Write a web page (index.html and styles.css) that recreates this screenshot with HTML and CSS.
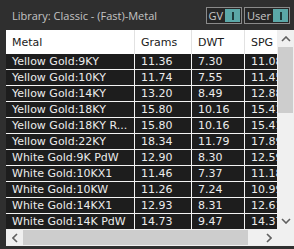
FILE: index.html
```html
<!DOCTYPE html>
<html>
<head>
    <title>Metal Library</title>
    <link rel="stylesheet" href="styles.css">
</head>
<body>
    <section class="panel">
        <div class="topbar">
            <span class="title">Library: Classic - (Fast)-Metal</span>
            <div class="toggles">
                <div class="toggle"><span class="label">GV</span><span class="knob"></span></div>
                <div class="toggle"><span class="label">User</span><span class="knob"></span></div>
            </div>
        </div>

        <div class="grid-box">
            <div class="grid-view">
                <div class="grid-head">
                    <div class="cell">Metal</div>
                    <div class="cell">Grams</div>
                    <div class="cell">DWT</div>
                    <div class="cell">SPG</div>
                </div>
                <div class="grid-body">
                    <div class="cell">Yellow Gold:9KY</div><div class="cell">11.36</div><div class="cell">7.30</div><div class="cell">11.08</div>
                    <div class="cell">Yellow Gold:10KY</div><div class="cell">11.74</div><div class="cell">7.55</div><div class="cell">11.45</div>
                    <div class="cell">Yellow Gold:14KY</div><div class="cell">13.20</div><div class="cell">8.49</div><div class="cell">12.88</div>
                    <div class="cell">Yellow Gold:18KY</div><div class="cell">15.80</div><div class="cell">10.16</div><div class="cell">15.41</div>
                    <div class="cell">Yellow Gold:18KY R...</div><div class="cell">15.80</div><div class="cell">10.16</div><div class="cell">15.41</div>
                    <div class="cell">Yellow Gold:22KY</div><div class="cell">18.34</div><div class="cell">11.79</div><div class="cell">17.89</div>
                    <div class="cell">White Gold:9K PdW</div><div class="cell">12.90</div><div class="cell">8.30</div><div class="cell">12.59</div>
                    <div class="cell">White Gold:10KX1</div><div class="cell">11.46</div><div class="cell">7.37</div><div class="cell">11.18</div>
                    <div class="cell">White Gold:10KW</div><div class="cell">11.26</div><div class="cell">7.24</div><div class="cell">10.99</div>
                    <div class="cell">White Gold:14KX1</div><div class="cell">12.93</div><div class="cell">8.31</div><div class="cell">12.61</div>
                    <div class="cell">White Gold:14K PdW</div><div class="cell">14.73</div><div class="cell">9.47</div><div class="cell">14.37</div>
                </div>
            </div>

            <!-- vertical scrollbar -->
            <div class="vscroll">
                <div class="sb-btn">
                    <svg width="10" height="6" viewBox="0 0 10 6"><polyline points="1,5 5,1 9,5" fill="none" stroke="#606060" stroke-width="1.6"/></svg>
                </div>
                <div class="vthumb"></div>
                <div class="sb-track"></div>
                <div class="sb-btn">
                    <svg width="10" height="6" viewBox="0 0 10 6"><polyline points="1,1 5,5 9,1" fill="none" stroke="#606060" stroke-width="1.6"/></svg>
                </div>
            </div>

            <!-- horizontal scrollbar -->
            <div class="hscroll">
                <div class="sb-btn">
                    <svg width="6" height="10" viewBox="0 0 6 10"><polyline points="5,1 1,5 5,9" fill="none" stroke="#606060" stroke-width="1.6"/></svg>
                </div>
                <div class="hthumb"></div>
                <div class="sb-track"></div>
                <div class="sb-btn">
                    <svg width="6" height="10" viewBox="0 0 6 10"><polyline points="1,1 5,5 1,9" fill="none" stroke="#606060" stroke-width="1.6"/></svg>
                </div>
            </div>
            <div class="corner"></div>
        </div>
    </section>
</body>
</html>
```

FILE: styles.css
```css
/* General Styles */
body {
    margin: 0;
    padding: 0;
    background-color: #2f2f2f;
    font-family: 'DejaVu Sans', Verdana, sans-serif;
}

.panel {
    width: 294px;
    height: 249px;
    overflow: hidden;
}

/* Top bar */
.topbar {
    height: 30px;
    display: flex;
    align-items: center;
    justify-content: space-between;
    padding: 0 4px 0 12px;
}

.topbar .title {
    font-family: 'Open Sans', Arial, sans-serif;
    font-size: 11px;
    color: #c4c4c4;
    margin-top: 1px;
}

.toggles {
    display: flex;
    gap: 2px;
    margin-top: 1px;
}

.toggle {
    display: flex;
    align-items: center;
    justify-content: space-between;
    height: 15px;
    padding: 0 1px 0 2px;
    border: 1px solid #8a8a8a;
    background-color: #262626;
    gap: 2px;
}

.toggle .label {
    font-family: 'Open Sans', Arial, sans-serif;
    font-size: 11px;
    color: #c8c8c8;
}

.toggle .knob {
    width: 15px;
    height: 13px;
    background-color: #5ba8a8;
    display: flex;
    align-items: center;
    justify-content: center;
}

.toggle .knob::after {
    content: '';
    width: 2px;
    height: 8px;
    background-color: #1d3b3b;
}

/* Grid */
.grid-box {
    margin-left: 6px;
    width: 288px;
    display: grid;
    grid-template-columns: 271px 17px;
    grid-template-rows: 199px 17px;
}

.grid-view {
    overflow: hidden;
    background-color: #fff;
}

.grid-head,
.grid-body {
    display: grid;
    grid-template-columns: 128px 56px 52px 32px;
    column-gap: 1px;
    font-size: 11px;
}

.grid-head {
    height: 24px;
    background-color: #e2e2e2;
}

.grid-head .cell {
    background-color: #fff;
    color: #1a1a1a;
    line-height: 25px;
}

.grid-body {
    row-gap: 1px;
    background-color: #f4f4f4;
}

.grid-body .cell {
    background-color: #1d1d1d;
    color: #ececec;
    height: 15px;
    line-height: 16px;
}

.cell {
    padding-left: 6px;
    white-space: nowrap;
    overflow: hidden;
}

/* Scrollbars */
.vscroll,
.hscroll {
    display: flex;
    background-color: #f0f0f0;
}

.vscroll {
    flex-direction: column;
}

.sb-btn {
    flex: 0 0 17px;
    display: flex;
    align-items: center;
    justify-content: center;
}

.sb-track {
    flex: 1;
}

.vthumb {
    height: 66px;
    margin: 0 1px;
    background-color: #cdcdcd;
}

.hthumb {
    width: 225px;
    margin: 1px 0;
    background-color: #cdcdcd;
}

.corner {
    background-color: #f0f0f0;
}
```
